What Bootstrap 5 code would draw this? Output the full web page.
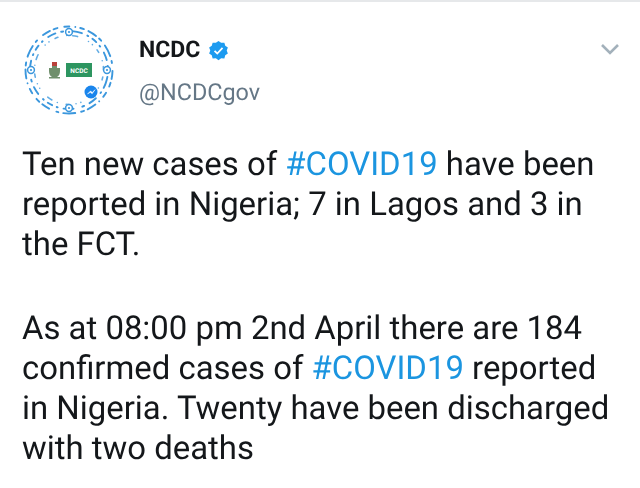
<!DOCTYPE html>
<html lang="en">
<head>
<meta charset="utf-8">
<title>NCDC tweet</title>
<link href="https://cdn.jsdelivr.net/npm/bootstrap@5.3.0/dist/css/bootstrap.min.css" rel="stylesheet">
<style>
html,body{margin:0;width:640px;height:488px;overflow:hidden;background:#fff;font-family:Roboto,"Liberation Sans",sans-serif;text-rendering:geometricPrecision}
.tweet-wrap{height:488px;border-top:2px solid #e6e8ea;padding:22px 20px 0 24px;filter:blur(.4px)}
.tweet-head{height:100px}
.qr{width:92px;height:92px;flex:none}
.names{margin-left:23px;padding-top:12px}
.uname{font-size:23px;font-weight:700;color:#14171a;line-height:28px}
.uhandle{font-size:23.4px;color:#657786;line-height:30px;margin-top:13px}
.chev{margin-top:19px}
.tweet-body{font-size:32.9px;line-height:40px;color:#14171a;margin:21px 0 0 -2px;white-space:nowrap}
.tweet-body a{color:#1b95e0;text-decoration:none}
.gap-line{height:44px}
</style>
</head>
<body>
<div class="tweet-wrap">
  <div class="tweet-head d-flex align-items-start">
    <svg class="qr" viewBox="0 0 92 92" aria-label="NCDC messenger code">
      <g fill="none" stroke="#3b97dd" stroke-linecap="round">
        <circle cx="45" cy="46" r="43.500" stroke-width="1.900" stroke-dasharray="0 5 9 4 3 6 12 5 2 8 8 4 4 7 5 6" transform="rotate(-70 45 46)"/>
        <circle cx="45" cy="46" r="39" stroke-width="1.900" stroke-dasharray="5 5 1 7 8 6 2 9 10 6 1 5" transform="rotate(20 45 46)"/>
        <circle cx="45" cy="46" r="34.500" stroke-width="1.600" stroke-dasharray="0 7 3 9 0 6 5 12 0 5" opacity=".8"/>
      </g>
      <g fill="#fff" stroke="#3b97dd" stroke-width="1.500">
        <circle cx="45" cy="8" r="3.400"/><circle cx="45" cy="84" r="3.400"/>
        <circle cx="7" cy="46" r="3.400"/><circle cx="83" cy="46" r="3.400"/>
      </g>
      <g fill="#3b97dd"><circle cx="45" cy="8" r="1.100"/><circle cx="45" cy="84" r="1.100"/><circle cx="7" cy="46" r="1.100"/><circle cx="83" cy="46" r="1.100"/></g>
      <path d="M25 44h3v-3h5v3h3v3c0 3-1 5-3 6h3v1.500H25V53h3c-2-1-3-3-3-6z" fill="#6f8f6c"/>
      <rect x="28" y="38" width="5" height="4" fill="#b9413b"/>
      <rect x="42" y="39" width="26" height="14" fill="#2d9560"/>
      <text x="55" y="48.500" text-anchor="middle" font-family="Roboto,sans-serif" font-size="6.500" font-weight="700" fill="#fff">NCDC</text>
      <circle cx="67" cy="68" r="6.500" fill="#1a85ec"/>
      <path d="M63.500 70l3-3 1.800 1.400 2.700-2.700-2.800 4-2-1.400z" fill="#fff" stroke="#fff" stroke-width=".5"/>
    </svg>
    <div class="names flex-grow-1">
      <div class="uname d-flex align-items-center">NCDC
        <svg class="ms-2" width="21" height="21" viewBox="0 0 24 24"><path fill="#1d9bf0" d="M12 1l3 2.200 3.700-.200 1 3.600 3 2.100-1.300 3.300 1.300 3.300-3 2.100-1 3.600-3.700-.200L12 23l-3-2.200-3.700.200-1-3.600-3-2.100L2.600 12 1.300 8.700l3-2.100 1-3.600 3.700.200z"/><path d="M7.500 12.300l3.100 3.100 6-6.400" fill="none" stroke="#fff" stroke-width="2"/></svg>
      </div>
      <div class="uhandle">@NCDCgov</div>
    </div>
    <svg class="chev" width="20" height="12" viewBox="0 0 20 12"><path d="M2 2l8 8 8-8" fill="none" stroke="#a3b1bb" stroke-width="2.600"/></svg>
  </div>
  <p class="tweet-body">Ten new cases of <a href="#">#COVID19</a> have been<br>reported in Nigeria; 7 in Lagos and 3 in<br>the FCT.</p>
  <div class="gap-line"></div>
  <p class="tweet-body mt-0">As at 08:00 pm 2nd April there are 184<br>confirmed cases of <a href="#">#COVID19</a> reported<br>in Nigeria. Twenty have been discharged<br>with two deaths</p>
</div>
</body>
</html>
